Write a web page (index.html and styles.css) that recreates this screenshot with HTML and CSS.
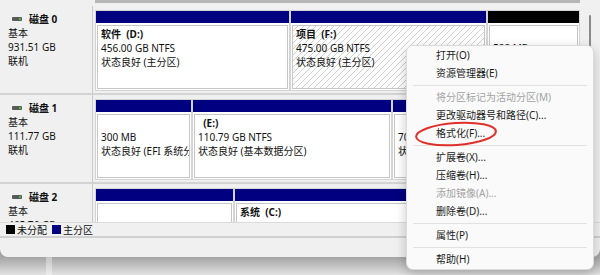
FILE: index.html
```html
<!DOCTYPE html>
<html lang="zh-CN">
<head>
    <meta charset="UTF-8">
    <title>磁盘管理</title>
    <link rel="stylesheet" href="styles.css">
</head>
<body>
    <div class="window">
        <!-- Graphical disk view -->
        <div class="disk-pane">
            <div class="disk-list">
                <div class="pane-top"></div>

                <div class="disk-row">
                    <div class="disk-label">
                        <div class="disk-name">
                            <svg class="disk-icon" width="10" height="4" viewBox="0 0 10 4"><rect width="10" height="4" rx="1" fill="#5a5a5a"/><rect x="7" y="1" width="2" height="2" fill="#3fbf3f"/></svg>
                            磁盘 0
                        </div>
                        <div>基本</div>
                        <div>931.51 GB</div>
                        <div>联机</div>
                    </div>
                    <div class="partitions">
                        <div class="part" style="width: 195px">
                            <div class="part-bar"></div>
                            <div class="part-body">
                                <div class="part-name">软件  (D:)</div>
                                <div>456.00 GB NTFS</div>
                                <div>状态良好 (主分区)</div>
                            </div>
                        </div>
                        <div class="part part-selected" style="width: 197px">
                            <div class="part-bar"></div>
                            <div class="part-body">
                                <div class="part-name">项目  (F:)</div>
                                <div>475.00 GB NTFS</div>
                                <div>状态良好 (主分区)</div>
                            </div>
                        </div>
                        <div class="part part-free" style="width: 93px">
                            <div class="part-bar"></div>
                            <div class="part-body">
                                <div class="part-name"></div>
                                <div>522 MB</div>
                                <div>未分配</div>
                            </div>
                        </div>
                    </div>
                </div>

                <div class="disk-row">
                    <div class="disk-label">
                        <div class="disk-name">
                            <svg class="disk-icon" width="10" height="4" viewBox="0 0 10 4"><rect width="10" height="4" rx="1" fill="#5a5a5a"/><rect x="7" y="1" width="2" height="2" fill="#3fbf3f"/></svg>
                            磁盘 1
                        </div>
                        <div>基本</div>
                        <div>111.77 GB</div>
                        <div>联机</div>
                    </div>
                    <div class="partitions">
                        <div class="part" style="width: 97px">
                            <div class="part-bar"></div>
                            <div class="part-body">
                                <div class="part-name"></div>
                                <div>300 MB</div>
                                <div>状态良好 (EFI 系统分区)</div>
                            </div>
                        </div>
                        <div class="part" style="width: 200px">
                            <div class="part-bar"></div>
                            <div class="part-body">
                                <div class="part-name">  (E:)</div>
                                <div>110.79 GB NTFS</div>
                                <div>状态良好 (基本数据分区)</div>
                            </div>
                        </div>
                        <div class="part" style="width: 188px">
                            <div class="part-bar"></div>
                            <div class="part-body">
                                <div class="part-name"></div>
                                <div>706 MB</div>
                                <div>状态良好 (恢复分区)</div>
                            </div>
                        </div>
                    </div>
                </div>

                <div class="disk-row">
                    <div class="disk-label">
                        <div class="disk-name">
                            <svg class="disk-icon" width="10" height="4" viewBox="0 0 10 4"><rect width="10" height="4" rx="1" fill="#5a5a5a"/><rect x="7" y="1" width="2" height="2" fill="#3fbf3f"/></svg>
                            磁盘 2
                        </div>
                        <div>基本</div>
                        <div>465.76 GB</div>
                        <div>联机</div>
                    </div>
                    <div class="partitions">
                        <div class="part" style="width: 139px">
                            <div class="part-bar"></div>
                            <div class="part-body">
                                <div class="part-name"></div>
                                <div>100 MB</div>
                                <div>状态良好 (EFI 系统分区)</div>
                            </div>
                        </div>
                        <div class="part" style="width: 346px">
                            <div class="part-bar"></div>
                            <div class="part-body">
                                <div class="part-name">系统  (C:)</div>
                                <div>465.66 GB NTFS</div>
                                <div>状态良好 (启动, 页面文件, 故障转储, 基本数据分区)</div>
                            </div>
                        </div>
                    </div>
                </div>
            </div>
            <div class="scroll-track">
                <div class="scroll-thumb"></div>
            </div>
        </div>

        <!-- Legend -->
        <div class="legend">
            <span class="swatch swatch-free"></span>
            <span>未分配</span>
            <span class="swatch swatch-primary"></span>
            <span>主分区</span>
        </div>

        <div class="statusbar"></div>
    </div>

    <!-- Context menu -->
    <div class="context-menu">
        <div class="menu-item">打开(O)</div>
        <div class="menu-item">资源管理器(E)</div>
        <div class="menu-sep"></div>
        <div class="menu-item disabled">将分区标记为活动分区(M)</div>
        <div class="menu-item">更改驱动器号和路径(C)...</div>
        <div class="menu-item">格式化(F)...</div>
        <div class="menu-sep"></div>
        <div class="menu-item">扩展卷(X)...</div>
        <div class="menu-item">压缩卷(H)...</div>
        <div class="menu-item disabled">添加镜像(A)...</div>
        <div class="menu-item">删除卷(D)...</div>
        <div class="menu-sep"></div>
        <div class="menu-item">属性(P)</div>
        <div class="menu-sep"></div>
        <div class="menu-item">帮助(H)</div>
    </div>

    <!-- Hand-drawn highlight around "格式化" -->
    <svg class="highlight" width="100" height="36" viewBox="0 0 100 36">
        <ellipse cx="50" cy="17" rx="40" ry="11" fill="none" stroke="#e0302c" stroke-width="2" transform="rotate(-4 50 17)"/>
    </svg>
</body>
</html>
```

FILE: styles.css
```css
* {
    margin: 0;
    padding: 0;
    box-sizing: border-box;
}

body {
    width: 600px;
    height: 275px;
    overflow: hidden;
    position: relative;
    font-family: 'Noto Sans', 'Noto Sans CJK SC', sans-serif;
    font-size: 10px;
    color: #111;
    background:
        linear-gradient(to right, transparent 46px, rgba(255, 255, 255, 0.35) 46px, rgba(255, 255, 255, 0.35) 52px, transparent 52px),
        linear-gradient(to bottom, #a4a4a4 257px, #e2e2e2 275px);
}

.window {
    height: 257px;
    background: #f0f0f0;
    border-radius: 0 0 8px 8px;
    overflow: hidden;
    display: flex;
    flex-direction: column;
}

/* Disk view */
.disk-pane {
    height: 222px;
    display: flex;
    overflow: hidden;
}

.disk-list {
    width: 580px;
}

.pane-top {
    height: 4px;
    margin-left: 95px;
    border-top: 3px solid #b6b6b6;
}

.disk-row {
    display: flex;
    height: 89px;
    border-top: 2px solid #d3d3d3;
}

.disk-row:nth-child(2) {
    border-top-color: transparent;
}

.disk-label {
    width: 93px;
    margin-right: 2px;
    padding: 6px 0 0 8px;
    border-right: 1px solid #c9c9c9;
    line-height: 14px;
    white-space: nowrap;
}

.disk-name {
    display: flex;
    align-items: center;
    font-weight: 700;
}

.disk-icon {
    margin: 0 7px 0 4px;
}

.partitions {
    flex: 1;
    display: flex;
    margin: 4px 0 2px;
}

.part {
    display: flex;
    flex-direction: column;
    flex-shrink: 0;
    border: 1px solid #d4d4d4;
    background: #fff;
}

.part-bar {
    height: 12px;
    background: #000080;
}

.part-free .part-bar {
    background: #000;
}

.part-body {
    flex: 1;
    margin: 2px 1px 1px;
    padding: 1px 3px;
    border: 1px solid #c6c6c6;
    line-height: 14px;
    white-space: nowrap;
    overflow: hidden;
}

.part-selected .part-body {
    background: repeating-linear-gradient(135deg, #fff 0 3.2px, #cfcfcf 3.2px 4.24px);
}

.part-name {
    height: 14px;
    font-weight: 700;
    white-space: pre;
}

.scroll-track {
    flex: 1;
    padding: 15px 0 0 9px;
}

.scroll-thumb {
    width: 2px;
    height: 220px;
    background: #8a8a8a;
    border-radius: 1px;
}

/* Legend */
.legend {
    height: 14px;
    display: flex;
    align-items: center;
    padding-left: 6px;
    border-top: 1px solid #dcdcdc;
    line-height: 14px;
}

.swatch {
    width: 9px;
    height: 9px;
    margin-right: 2px;
}

.swatch-free {
    background: #000;
}

.swatch-primary {
    background: #000080;
    margin-left: 5px;
}

.statusbar {
    flex: 1;
    border-top: 2px solid #d0d0d0;
}

/* Context menu */
.context-menu {
    position: absolute;
    left: 406px;
    top: 45px;
    width: 188px;
    padding: 0 4px 1px;
    background: #fafafa;
    border: 1px solid #dcdcdc;
    border-radius: 7px;
    box-shadow: 0 4px 12px rgba(0, 0, 0, 0.22);
    color: #1a1a1a;
}

.menu-item {
    height: 18px;
    line-height: 18px;
    padding-left: 25px;
    white-space: nowrap;
}

.menu-item.disabled {
    color: #a2a2a2;
}

.menu-sep {
    height: 1px;
    margin: 3px 2px 2px;
    background: #e2e2e2;
}

.highlight {
    position: absolute;
    left: 406px;
    top: 117px;
}
```
